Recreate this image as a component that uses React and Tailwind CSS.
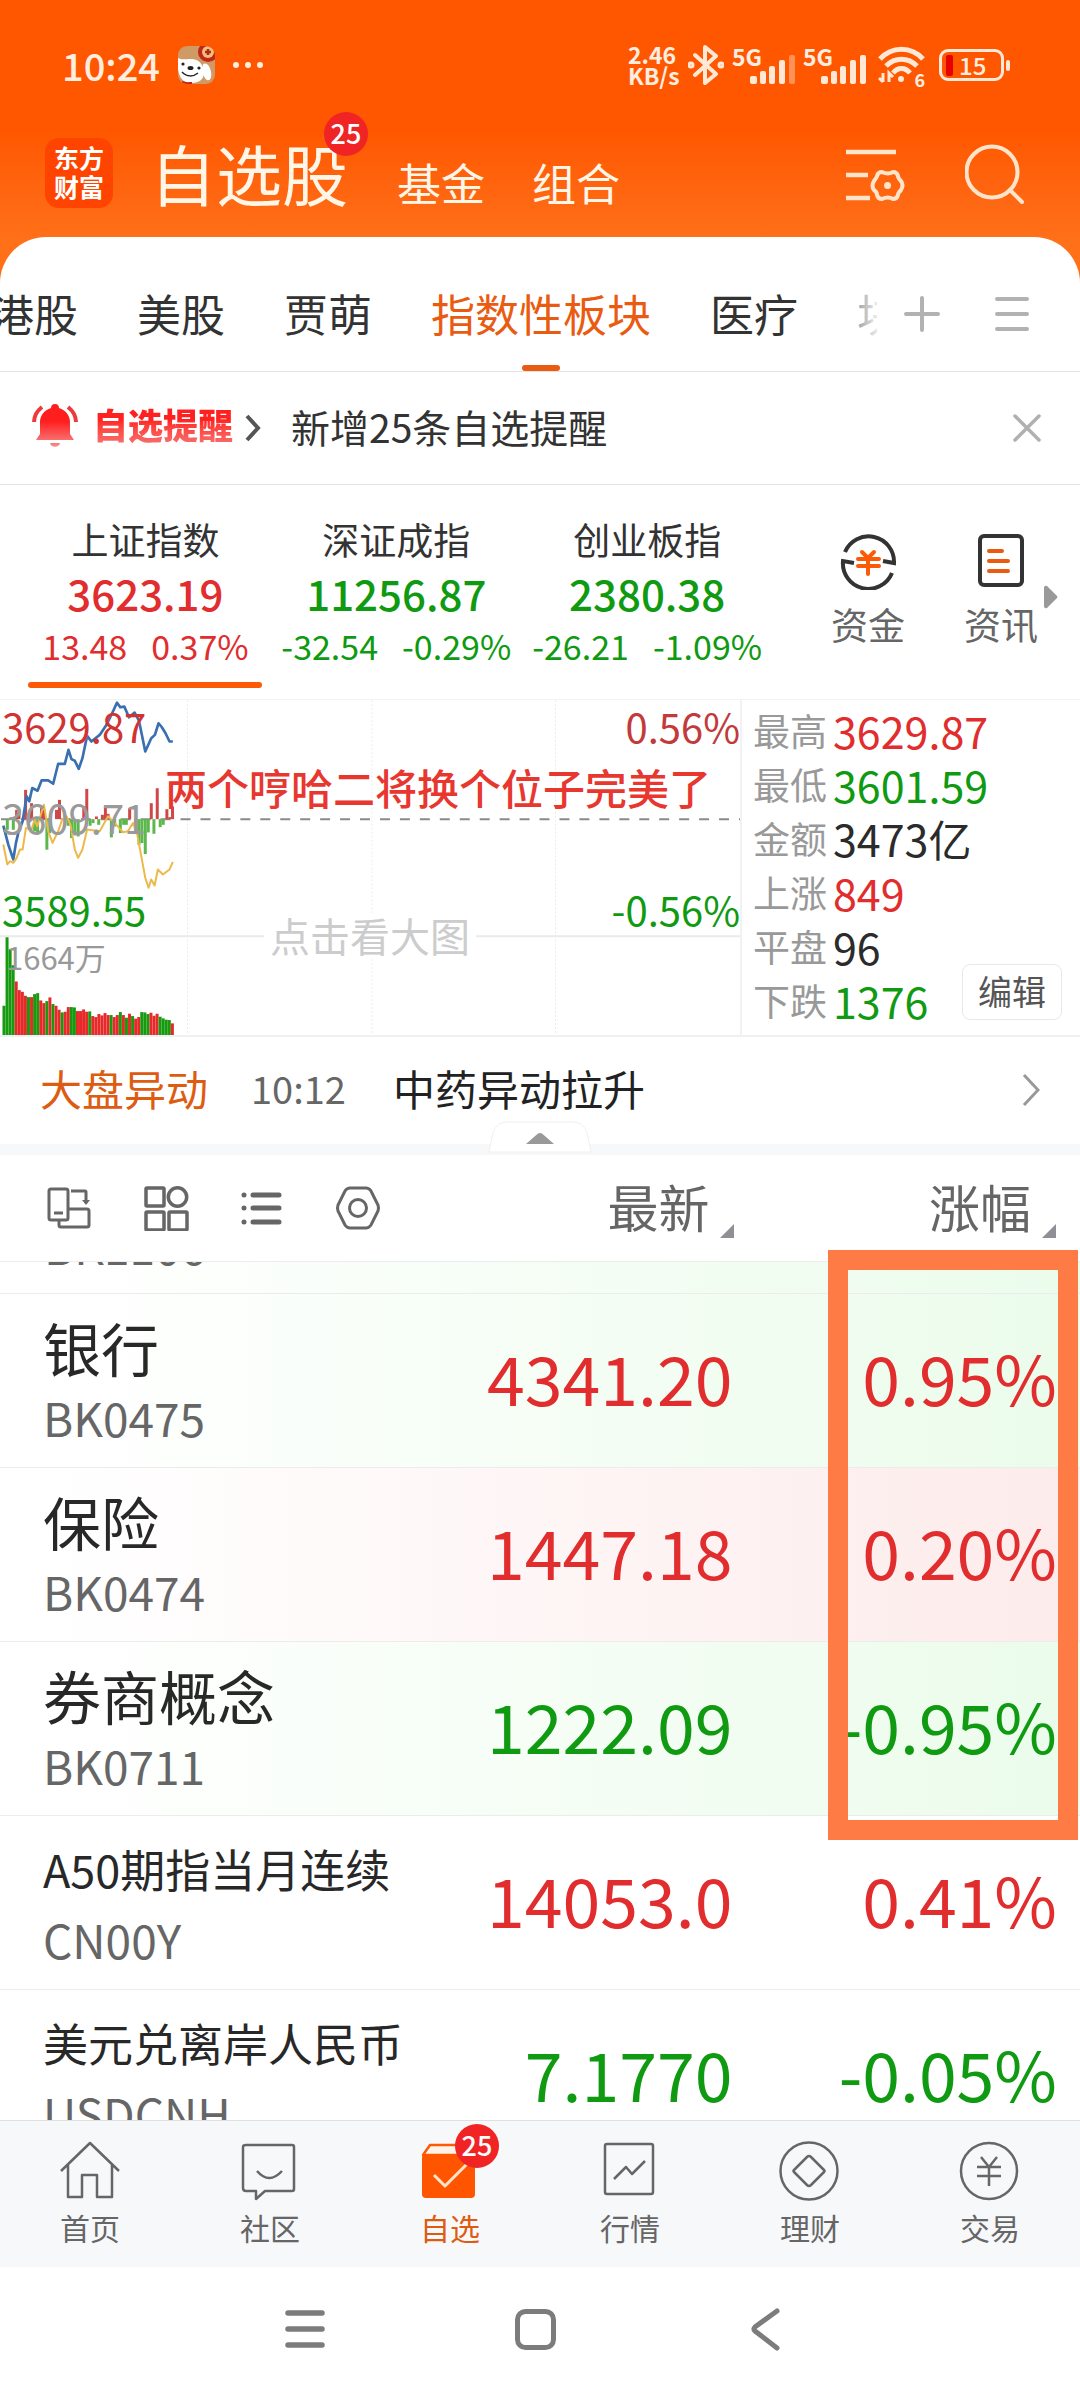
import React from "react";

const RED = "text-[#e12d2d]";
const GREEN = "text-[#0f9a12]";

const indices = [
  { name: "上证指数", value: "3623.19", diff: "13.48", pct: "0.37%", tone: RED, active: true },
  { name: "深证成指", value: "11256.87", diff: "-32.54", pct: "-0.29%", tone: GREEN },
  { name: "创业板指", value: "2380.38", diff: "-26.21", pct: "-1.09%", tone: GREEN },
];

const stats = [
  ["最高", "3629.87", RED],
  ["最低", "3601.59", GREEN],
  ["金额", "3473亿", "text-[#2b2b2b]"],
  ["上涨", "849", RED],
  ["平盘", "96", "text-[#2b2b2b]"],
  ["下跌", "1376", GREEN],
];

const greenRow = "bg-linear-to-r from-white from-5% to-[#ebfceb]";
const redRow = "bg-linear-to-r from-white from-5% to-[#fdebeb]";

const rows = [
  { name: "银行", code: "BK0475", price: "4341.20", pct: "0.95%", tone: RED, bg: greenRow, size: "text-[58px]" },
  { name: "保险", code: "BK0474", price: "1447.18", pct: "0.20%", tone: RED, bg: redRow, size: "text-[58px]" },
  { name: "券商概念", code: "BK0711", price: "1222.09", pct: "-0.95%", tone: GREEN, bg: greenRow, size: "text-[58px]" },
  { name: "A50期指当月连续", code: "CN00Y", price: "14053.0", pct: "0.41%", tone: RED, bg: "bg-white", size: "text-[45px]" },
  { name: "美元兑离岸人民币", code: "USDCNH", price: "7.1770", pct: "-0.05%", tone: GREEN, bg: "bg-white", size: "text-[45px]" },
];

const volumes = [
  88, 294, 258, 210, 161, 135, 130, 118, 114, 114, 123, 126, 104, 96, 102, 113, 93, 88, 76, 68, 70, 84, 84, 83, 72, 72,
  77, 70, 71, 57, 54, 63, 59, 66, 60, 60, 54, 60, 69, 60, 52, 64, 57, 49, 54, 69, 68, 63, 67, 58, 64, 55, 50, 46, 45, 35,
];
const volumeTones = "GGGGRRRRGRGGRRGRGRRGRRGGRRRRGRRRRRRGRRGRGRGRRGGGRRRGGGGR";

const upBars = [
  [50, 28], [57, 30], [77, 88], [95, 48], [125, 38], [132, 30], [170, 28], [179, 58], [252, 38], [261, 91], [290, 8],
  [308, 13], [317, 38], [325, 16], [390, 33], [455, 48], [473, 93], [502, 30], [511, 6], [519, 38],
];
const downBars = [
  [22, 32], [40, 32], [104, 37], [113, 42], [141, 92], [150, 42], [205, 20], [215, 57], [225, 49], [235, 52], [271, 20],
  [280, 12], [297, 17], [335, 55], [345, 22], [362, 42], [372, 17], [380, 17], [409, 45], [418, 77], [427, 72], [437, 105],
  [446, 40], [463, 44], [482, 24], [491, 17],
];

function Signal({ full }) {
  return (
    <svg className="mt-2 h-[30px] w-[45px]" viewBox="0 0 45 30" fill="#ffe9d6">
      <rect x="0" y="22" width="7" height="8" rx="2" />
      <rect x="10" y="17" width="6" height="13" rx="2" />
      <rect x="19" y="12" width="6" height="18" rx="2" />
      <rect x="29" y="6" width="6" height="24" rx="2" />
      <rect x="39" y="1" width="6" height="29" rx="2" opacity={full ? 1 : 0.4} />
    </svg>
  );
}

function StatusBar() {
  return (
    <div className="flex h-[130px] items-center justify-between pr-[70px] pl-[62px] text-[#ffeee0]">
      <div className="flex items-center">
        <span className="text-[38px] leading-[40px] font-medium">10:24</span>
        <svg className="ml-[18px] h-[38px] w-[37px]" viewBox="0 0 37 38">
          <defs>
            <clipPath id="dogclip"><rect width="37" height="38" rx="9" /></clipPath>
          </defs>
          <g clipPath="url(#dogclip)">
            <rect width="37" height="38" fill="#cf9a63" />
            <circle cx="30" cy="6" r="10" fill="#c0281c" />
            <circle cx="30" cy="6" r="6" fill="#f6bd78" />
            <path d="M30 3v6M27 6h6" stroke="#a3301c" strokeWidth="2.5" />
            <path d="M25 18c4-2 7 2 8 8s-1 9-4 8-5-8-4-16z" fill="#fff" />
            <path d="M0 12c3 2 7 1 13 1 8 0 13 6 13 14 0 7-6 10-13 10C5 37 1 31 0 23z" fill="#fff" />
            <ellipse cx="12.500" cy="22" rx="3" ry="2" fill="#222" />
            <circle cx="5" cy="18" r="1.600" fill="#222" />
            <circle cx="21" cy="22" r="1.600" fill="#222" />
            <path d="M4 26c5 5 11 5 16 1" stroke="#222" strokeWidth="1.500" fill="none" />
            <path d="M4 36c4 2 7 1 10 1" stroke="#c0281c" strokeWidth="2" fill="none" />
          </g>
        </svg>
        <svg className="ml-[17px] h-2 w-8" viewBox="0 0 32 8" fill="#ffeee0">
          <circle cx="4" cy="4" r="3" /><circle cx="16" cy="4" r="3" /><circle cx="28" cy="4" r="3" />
        </svg>
      </div>
      <div className="flex items-center">
        <div className="w-[52px] text-[23px] leading-[21px] font-bold">
          <div>2.46</div>
          <div>KB/s</div>
        </div>
        <svg className="ml-2 h-10 w-[36px]" viewBox="0 0 36 40" fill="none" stroke="#ffe9d6" strokeWidth="4" strokeLinejoin="round" strokeLinecap="round">
          <path d="M7 10l21 19-11 9V2l11 9L7 30" />
          <circle cx="3" cy="20" r="1.500" /><circle cx="33" cy="20" r="1.500" />
        </svg>
        <div className="ml-2 flex items-start">
          <span className="-mr-3 text-[23px] leading-[21px] font-bold">5G</span>
          <Signal />
        </div>
        <div className="ml-2 flex items-start">
          <span className="-mr-3 text-[23px] leading-[21px] font-bold">5G</span>
          <Signal full />
        </div>
        <div className="relative ml-3 h-[38px] w-[47px]">
          <svg className="h-[38px] w-[47px]" viewBox="0 0 47 38" fill="none" stroke="#ffe9d6" strokeWidth="5">
            <path d="M2 13c12-13 31-13 43 0" />
            <path d="M8 20c9-9 22-9 31 0" />
            <path d="M15 27c5-6 12-6 17 0" />
            <circle cx="23" cy="33" r="3" fill="#ffe9d6" stroke="none" />
            <path d="M5 27v9M1 32l4 4M11 36v-9l4 4" strokeWidth="3" />
          </svg>
          <span className="absolute right-0 -bottom-1 text-[18px] leading-[18px] font-bold">6</span>
        </div>
        <div className="ml-[14px] flex items-center">
          <div className="flex h-[32px] w-[65px] items-center rounded-[9px] border-[3px] border-[#ffe9d6] pl-1">
            <i className="h-[21px] w-[7px] rounded-xs bg-[#e60000]" />
            <span className="ml-1.5 text-[24px] leading-[24px] font-medium">15</span>
          </div>
          <i className="ml-0.5 h-[11px] w-1 rounded-full bg-[#ffe9d6]" />
        </div>
      </div>
    </div>
  );
}

function Header() {
  return (
    <header className="flex h-[107px] items-start pr-[55px] pl-[45px] text-[#fff6e8]">
      <div className="mt-2 flex h-[70px] w-[68px] flex-col items-center justify-center rounded-[14px] bg-[#ff4400] pb-0.5 text-[25px] leading-[29px] font-bold text-white">
        <span>东方</span>
        <span>财富</span>
      </div>
      <div className="mt-1.5 ml-[37px] flex items-baseline">
        <h1 className="relative text-[66px] leading-[72px]">
          自选股
          <span className="absolute -top-6 -right-5 flex size-11 items-center justify-center rounded-full bg-[#f02424] pb-0.5 text-[27px] leading-[28px] font-medium text-white">25</span>
        </h1>
        <a href="#fund" className="ml-[49px] text-[44px] leading-[48px]">基金</a>
        <a href="#group" className="ml-[47px] text-[44px] leading-[48px]">组合</a>
      </div>
      <button aria-label="设置" className="mt-4 ml-auto">
        <svg className="h-[56px] w-[60px]" viewBox="0 0 60 56" fill="none" stroke="#ffe4cc" strokeWidth="4.500">
          <path d="M1 6h50M1 29h22M1 52h24" />
          <path d="M37 26q6 3 11 0q4 0 5 4q0 2 3 5q3 4 0 9q-3 3-3 5q-1 4-5 4q-5-3-11 0q-4 0-5-4q0-3-3-5q-3-4 0-9q3-4 3-5q1-4 5-4z" strokeWidth="4" strokeLinejoin="round" />
          <circle cx="42.500" cy="39.500" r="3.500" fill="#ffe4cc" stroke="none" />
        </svg>
      </button>
      <button aria-label="搜索" className="mt-3.5 ml-[60px]">
        <svg className="size-[60px]" viewBox="0 0 60 60" fill="none" stroke="#ffe4cc" strokeWidth="4" strokeLinecap="round">
          <circle cx="27" cy="28" r="25.500" /><path d="M45 46l12 12" />
        </svg>
      </button>
    </header>
  );
}

function GroupTabs() {
  return (
    <div className="flex h-[135px] items-stretch border-b border-[#e4e4e4] text-[#333]">
      <nav className="relative flex min-w-0 flex-1 gap-[59px] overflow-hidden text-[44px] leading-[48px] whitespace-nowrap">
        {["港股", "美股", "贾萌", "指数性板块", "医疗", "块"].map((t, i) => (
          <button
            key={t}
            className={
              i === 0 ? "-ml-2.5 shrink-0 pt-[18px]" : i === 3 ? "relative shrink-0 pt-[18px] text-[#ea5b12]" : "shrink-0 pt-[18px]"
            }
          >
            {t}
            {i === 3 && <span className="absolute bottom-0 left-1/2 h-1.5 w-[38px] -translate-x-1/2 rounded-full bg-[#ea5b12]" />}
          </button>
        ))}
        <span className="absolute top-0 right-0 h-full w-7 bg-linear-to-r from-white/40 to-white/90" />
      </nav>
      <div className="flex w-[203px] items-center pt-5 pl-[27px]">
        <button aria-label="添加">
          <svg className="size-9" viewBox="0 0 36 36" stroke="#b2b2b2" strokeWidth="4" strokeLinecap="round"><path d="M2 18h32M18 2v32" /></svg>
        </button>
        <button aria-label="分组列表" className="ml-[55px]">
          <svg className="h-9 w-[34px]" viewBox="0 0 34 36" stroke="#b2b2b2" strokeWidth="4" strokeLinecap="round"><path d="M2 3h30M2 18h30M2 33h30" /></svg>
        </button>
      </div>
    </div>
  );
}

function Alert() {
  return (
    <div className="flex h-[113px] items-center border-b border-[#e4e4e4] pr-[39px] pl-8">
      <svg className="-mt-1 h-[46px] w-[46px]" viewBox="0 0 46 46">
        <defs>
          <linearGradient id="bell" x1="0" y1="0" x2="0" y2="1">
            <stop offset="0.400" stopColor="#ff1e1e" /><stop offset="1" stopColor="#f98a8a" />
          </linearGradient>
        </defs>
        <path d="M23 1c3 0 4 2 4 4 7 2 11 8 11 14v12l4 6H4l4-6V19C8 13 12 7 19 5c0-2 1-4 4-4zM18 40h10c-1 5-9 5-10 0z" fill="url(#bell)" />
        <path d="M2 19c0-6 3-11 8-15M44 19c0-6-3-11-8-15" fill="none" stroke="#ee3a3a" strokeWidth="4" />
      </svg>
      <span className="-mt-2 ml-[15px] bg-linear-to-b from-[#ff2020] from-40% to-[#f77070] bg-clip-text text-[35px] leading-[44px] font-black text-transparent">自选提醒</span>
      <svg className="ml-3 h-7 w-4" viewBox="0 0 16 28" fill="none" stroke="#555" strokeWidth="4"><path d="M2 2l11 12L2 26" /></svg>
      <span className="-mt-1 ml-[30px] text-[39px] leading-[44px] text-[#333]">新增25条自选提醒</span>
      <button aria-label="关闭" className="ml-auto">
        <svg className="size-7" viewBox="0 0 28 28" stroke="#b0b0b0" strokeWidth="3.500" strokeLinecap="round"><path d="M2 2l24 24M26 2L2 26" /></svg>
      </button>
    </div>
  );
}

function Indices() {
  return (
    <section className="flex h-[215px] items-stretch border-b border-[#f2f2f2] pl-5">
      <div className="grid w-[71%] grid-cols-3">
        {indices.map((x) => (
          <button key={x.name} className="flex flex-col items-center justify-start pt-8 whitespace-nowrap">
            <span className="text-[37px] leading-[44px] text-[#333]">{x.name}</span>
            <span className={`mt-1 text-[42px] leading-[56px] font-medium ${x.tone}`}>{x.value}</span>
            <span className={`flex gap-6 text-[34px] leading-[50px] ${x.tone}`}>
              <span>{x.diff}</span>
              <span>{x.pct}</span>
            </span>
            {x.active && <i className="mt-[11px] h-1.5 w-[234px] rounded-full bg-[#fb5a07]" />}
          </button>
        ))}
      </div>
      <div className="flex flex-1 items-start justify-end pt-[48px] text-[37px] leading-[44px] text-[#666]">
        <button className="flex flex-col items-center">
          <svg className="size-[57px]" viewBox="0 0 57 57" fill="none" stroke="#333" strokeWidth="4">
            <path d="M5 19A25.500 25.500 0 0 1 54 30l-11-2" />
            <path d="M52 40A25.500 25.500 0 0 1 3 28l11 2" />
            <path d="M22 19l6 6 6-6M18 26h21M18 33h21M28 25v16" stroke="#fb5a07" strokeLinecap="round" />
          </svg>
          <span className="mt-3">资金</span>
        </button>
        <button className="ml-[59px] flex flex-col items-center">
          <svg className="h-[57px] w-[46px]" viewBox="0 0 46 57" fill="none" stroke="#333" strokeWidth="4">
            <rect x="2" y="3" width="42" height="49" rx="4" />
            <path d="M11 18h13M11 28h19M11 38h19" stroke="#ea5b12" strokeLinecap="round" />
          </svg>
          <span className="mt-3">资讯</span>
        </button>
        <svg className="mt-[52px] mr-[22px] ml-1.5 h-6 w-[14px]" viewBox="0 0 14 24" fill="#999">
          <path d="M0 3q0-3 3-2l10 10q1 1 0 2L3 23q-3 1-3-2z" />
        </svg>
      </div>
    </section>
  );
}

function Chart() {
  return (
    <section className="flex h-[337px] border-b-2 border-[#f0f0f0]">
      <div className="relative flex-1 border-r-2 border-[#f2f2f2] text-[40px] leading-[44px]">
        <svg className="block h-full w-full" viewBox="0 0 742 336" preserveAspectRatio="none">
          <g stroke="#ececec" strokeDasharray="2 2">
            <path d="M188 0v336M373 0v336M557 0v336" />
          </g>
          <path d="M0 237h742" stroke="#eaeaea" strokeWidth="2" />
          <path d="M1 119.500h741" stroke="#8a8a8a" strokeWidth="2" strokeDasharray="10 10" />
          {upBars.map(([x, h]) => (
            <rect key={x} x={x / 3 - 1.5} y={119.5 - h / 3} width="3" height={h / 3} fill="#cf4747" />
          ))}
          {downBars.map(([x, h]) => (
            <rect key={x} x={x / 3 - 1.5} y="119.500" width="3" height={h / 3} fill="#5cb84c" />
          ))}
          {volumes.map((v, i) => (
            <rect key={i} x={2.5 + i * 3.07} y={336 - v / 3} width="3" height={v / 3} fill={volumeTones[i] === "G" ? "#179a10" : "#e62a2a"} />
          ))}
          <g transform="translate(0 -10) scale(0.3333)" fill="none" strokeLinejoin="round">
            <path stroke="#3a6fb0" strokeWidth="8" d="M10 408L25 465 40 510 48 460 55 430 68 395 80 320 88 335 97 295 113 303 125 272 145 272 160 282 175 222 195 222 206 180 215 208 225 213 237 237 248 205 262 138 275 155 300 135 320 105 335 75 352 38 362 52 374 50 388 82 405 68 418 92 437 185 455 145 466 135 477 100 487 112 498 130 510 155 520 155" />
            <path stroke="#ecb94a" strokeWidth="6" d="M10 465L22 525 30 515 40 520 50 505 60 480 68 480 78 415 95 420 104 390 112 410 132 345 145 425 158 460 175 425 187 390 200 380 212 405 225 480 235 505 248 480 262 420 300 425 325 380 345 400 370 428 385 425 400 400 412 430 425 500 437 565 447 595 455 570 465 588 475 540 490 555 510 540 520 517" />
          </g>
        </svg>
        <span className="absolute top-1 left-0.5 text-[#d13232]">3629.87</span>
        <span className="absolute top-[95px] left-0.5 text-[#9a9a9a]">3609.71</span>
        <span className={`absolute top-[187px] left-0.5 ${GREEN}`}>3589.55</span>
        <span className="absolute top-[237px] left-1.5 text-[31px] leading-[40px] text-[#999]">1664万</span>
        <span className="absolute top-1 right-0 text-[#c23a3a]">0.56%</span>
        <span className={`absolute top-[187px] right-0 ${GREEN}`}>-0.56%</span>
        <span className="absolute top-[65px] left-[165px] text-[42px] leading-[44px] font-medium whitespace-nowrap text-[#e8372f]">两个哼哈二将换个位子完美了</span>
        <button className="absolute top-[213px] left-1/2 -translate-x-1/2 bg-white px-1.5 text-[40px] leading-[44px] whitespace-nowrap text-[#ccc]">点击看大图</button>
      </div>
      <div className="relative w-[338px] pt-[3px] pl-[11px]">
        <dl>
          {stats.map(([k, v, tone]) => (
            <div key={k} className="flex h-[54px] items-center">
              <dt className="text-[37px] leading-[44px] text-[#999]">{k}</dt>
              <dd className={`ml-1.5 text-[43px] leading-[44px] ${tone}`}>{v}</dd>
            </div>
          ))}
        </dl>
        <button className="absolute right-[18px] bottom-[15px] h-[56px] w-[100px] rounded-lg border border-[#e8e8e8] bg-white pb-0.5 text-[34px] leading-[40px] text-[#555]">编辑</button>
      </div>
    </section>
  );
}

function News() {
  return (
    <section className="relative flex h-[118px] items-center border-b-[11px] border-[#f7f8fa] pr-[40px] pb-1.5 pl-10 text-[42px] leading-[48px]">
      <span className="text-[#dd5c12]">大盘异动</span>
      <span className="ml-[43px] text-[38px] text-[#666]">10:12</span>
      <a href="#news" className="ml-[47px] text-[#222]">中药异动拉升</a>
      <svg className="mt-1 ml-auto h-8 w-[18px]" viewBox="0 0 18 32" fill="none" stroke="#999" strokeWidth="3"><path d="M2 1l14 15L2 31" /></svg>
      <button aria-label="收起" className="absolute -bottom-[9px] left-1/2 -translate-x-1/2">
        <svg className="block h-8 w-[104px]" viewBox="0 0 104 32">
          <path d="M1 31Q3 20 5 12Q8 1 20 1H84Q96 1 99 12Q101 20 103 31z" fill="#fff" stroke="#f0f0f0" />
          <path d="M38 23L50 12.500q2-1 4 0L66 23z" fill="#999" />
        </svg>
      </button>
    </section>
  );
}

function SortHead({ children }) {
  return (
    <button className="relative pr-[25px] pb-1 text-[51px] leading-[56px] font-normal">
      {children}
      <svg className="absolute right-0 bottom-0 size-3.5" viewBox="0 0 14 14" fill="#8f8f96"><path d="M14 0v14H0z" /></svg>
    </button>
  );
}

function Watchlist() {
  return (
    <section className="relative min-h-0 flex-1 overflow-hidden">
      <table className="w-full table-fixed border-collapse">
        <colgroup>
          <col className="w-[41%]" />
          <col className="w-[27%]" />
          <col className="w-[32%]" />
        </colgroup>
        <thead className="text-[#666]">
          <tr className="h-[106px] border-b border-[#ececec]">
            <th className="p-0">
              <div className="flex items-center gap-[52px] pl-[46px]">
                <button aria-label="横屏">
                  <svg className="size-[46px]" viewBox="0 0 46 46" fill="none" stroke="#666" strokeWidth="3">
                    <rect x="3" y="4" width="19" height="31" rx="2" />
                    <path d="M8 28h9M25 6h14q1 0 1 1v11M13 36v4q0 2 2 2h26q2 0 2-2V26q0-2-2-2H23" />
                    <path d="M36 15h8l-4 5z" fill="#666" stroke="none" />
                  </svg>
                </button>
                <button aria-label="宫格">
                  <svg className="h-[46px] w-[45px]" viewBox="0 0 45 46" fill="none" stroke="#666" strokeWidth="3.500">
                    <rect x="2" y="3" width="18" height="18" rx="1" />
                    <circle cx="33.500" cy="12" r="9.200" />
                    <rect x="2" y="27" width="18" height="18" rx="1" />
                    <rect x="25" y="27" width="18" height="18" rx="1" />
                  </svg>
                </button>
                <button aria-label="列表">
                  <svg className="size-[42px]" viewBox="0 0 42 42" stroke="#666" strokeWidth="5" strokeLinecap="round">
                    <path d="M12 8h26M12 21h26M12 35h26M3 8h.01M3 21h.01M3 35h.01" />
                  </svg>
                </button>
                <button aria-label="设置列">
                  <svg className="size-[46px]" viewBox="0 0 46 46" fill="none" stroke="#666" strokeWidth="3">
                    <path d="M15 3h16q3 0 5 3l7 14q1 3 0 6l-7 14q-2 3-5 3H15q-3 0-5-3L3 26q-1-3 0-6L10 6q2-3 5-3z" />
                    <circle cx="23" cy="23" r="8.500" />
                  </svg>
                </button>
              </div>
            </th>
            <th className="p-0 text-right"><SortHead>最新</SortHead></th>
            <th className="p-0 pr-6 text-right"><SortHead>涨幅</SortHead></th>
          </tr>
        </thead>
        <tbody>
          <tr className={`border-b border-[#ececec] ${greenRow}`}>
            <td className="p-0 pl-11" colSpan={3}>
              <div className="h-[31px] overflow-hidden">
                <div className="-mt-[40px] text-[46px] leading-[46px] text-[#666]">BK1106</div>
              </div>
            </td>
          </tr>
          {rows.map((r) => (
            <tr key={r.code} className={`h-[174px] border-b border-[#ececec] ${r.bg}`}>
              <td className="p-0 pt-1 pl-[43px] whitespace-nowrap">
                <div className={`leading-[70px] text-[#282828] ${r.size}`}>{r.name}</div>
                <div className="text-[46px] leading-[70px] text-[#666]">{r.code}</div>
              </td>
              <td className={`p-0 pr-0.5 pb-1.5 text-right text-[68px] leading-[80px] ${r.tone}`}>{r.price}</td>
              <td className={`p-0 pr-[23px] pb-1.5 text-right text-[68px] leading-[80px] ${r.tone}`}>{r.pct}</td>
            </tr>
          ))}
        </tbody>
      </table>
      <div className="pointer-events-none absolute top-[95px] right-0.5 h-[590px] w-[250px] border-20 border-[#ff7b45]" />
    </section>
  );
}

const navIcons = [
  <><path d="M2 31L31 3l29 28M9 25v32h14V35h15v22h15V25" /></>,
  <><path d="M7 5h46q2 0 2 2v42q0 2-2 2H26l-9 8v-8H7q-3 0-3-3V7q0-2 3-2zM18 31q12 14 25 0" /></>,
  <>
    <path d="M11 5h42v10H4z" fill="#fff3e8" stroke="#fb5a07" />
    <rect x="3" y="14" width="53" height="44" rx="4" fill="#ff5500" stroke="none" />
    <path d="M15 35l11 11 22-22" stroke="#ffe4cc" strokeWidth="3" />
  </>,
  <><rect x="6" y="4" width="48" height="50" rx="2" /><path d="M15 39l12-12 6 7 13-13" /></>,
  <><circle cx="30" cy="31" r="28.500" /><path d="M28 17q2-2 4 0l13 13q1 1 0 2L32 45q-2 2-4 0L15 32q-1-1 0-2z" /></>,
  <><circle cx="30" cy="31" r="28" /><path d="M22 17l8 10 8-10M18 27h24M18 36h24M30 27v19" /></>,
];

function BottomNav() {
  return (
    <nav className="grid h-[147px] grid-cols-6 border-t border-[#e0e0e0] bg-[#f7f8fa] text-[30px] leading-[36px]">
      {["首页", "社区", "自选", "行情", "理财", "交易"].map((t, i) => (
        <a key={t} href={`#tab${i}`} className={i === 2 ? "flex flex-col items-center pt-[19px] text-[#dd5c12]" : "flex flex-col items-center pt-[19px] text-[#666]"}>
          <span className="relative">
            <svg className="block size-[62px]" viewBox="0 0 62 62" fill="none" stroke="#666" strokeWidth="2.500" strokeLinejoin="round">{navIcons[i]}</svg>
            {i === 2 && (
              <span className="absolute -top-4 -right-[18px] flex size-11 items-center justify-center rounded-full bg-[#f02424] pb-0.5 text-[27px] leading-[28px] font-medium text-white">25</span>
            )}
          </span>
          <span className="mt-[7px]">{t}</span>
        </a>
      ))}
    </nav>
  );
}

function SystemNav() {
  return (
    <div className="flex h-[133px] items-center justify-center gap-[187px] bg-white pr-2.5 pb-2">
      <button aria-label="最近任务">
        <svg className="size-[43px]" viewBox="0 0 43 43" stroke="#7c7c7c" strokeWidth="5.500" strokeLinecap="round"><path d="M4 5h34M4 21h34M4 37h34" /></svg>
      </button>
      <button aria-label="主屏幕">
        <svg className="size-[43px]" viewBox="0 0 43 43" fill="none" stroke="#7c7c7c" strokeWidth="5"><rect x="3.500" y="3.500" width="36" height="36" rx="8" /></svg>
      </button>
      <button aria-label="返回">
        <svg className="size-[43px]" viewBox="0 0 43 43" fill="none" stroke="#7c7c7c" strokeWidth="5" strokeLinecap="round"><path d="M33 3L11 19q-2 2 0 4l22 17" /></svg>
      </button>
    </div>
  );
}

export default function App() {
  return (
    <div className="flex h-screen flex-col overflow-hidden bg-white font-['Noto_Sans_CJK_SC',sans-serif]">
      <div className="bg-linear-to-b from-[#ff5700] from-35% to-[#ff7019] to-65%">
        <StatusBar />
        <Header />
        <div className="h-[135px] rounded-t-[46px] bg-white">
          <GroupTabs />
        </div>
      </div>
      <Alert />
      <Indices />
      <Chart />
      <News />
      <Watchlist />
      <BottomNav />
      <SystemNav />
    </div>
  );
}
